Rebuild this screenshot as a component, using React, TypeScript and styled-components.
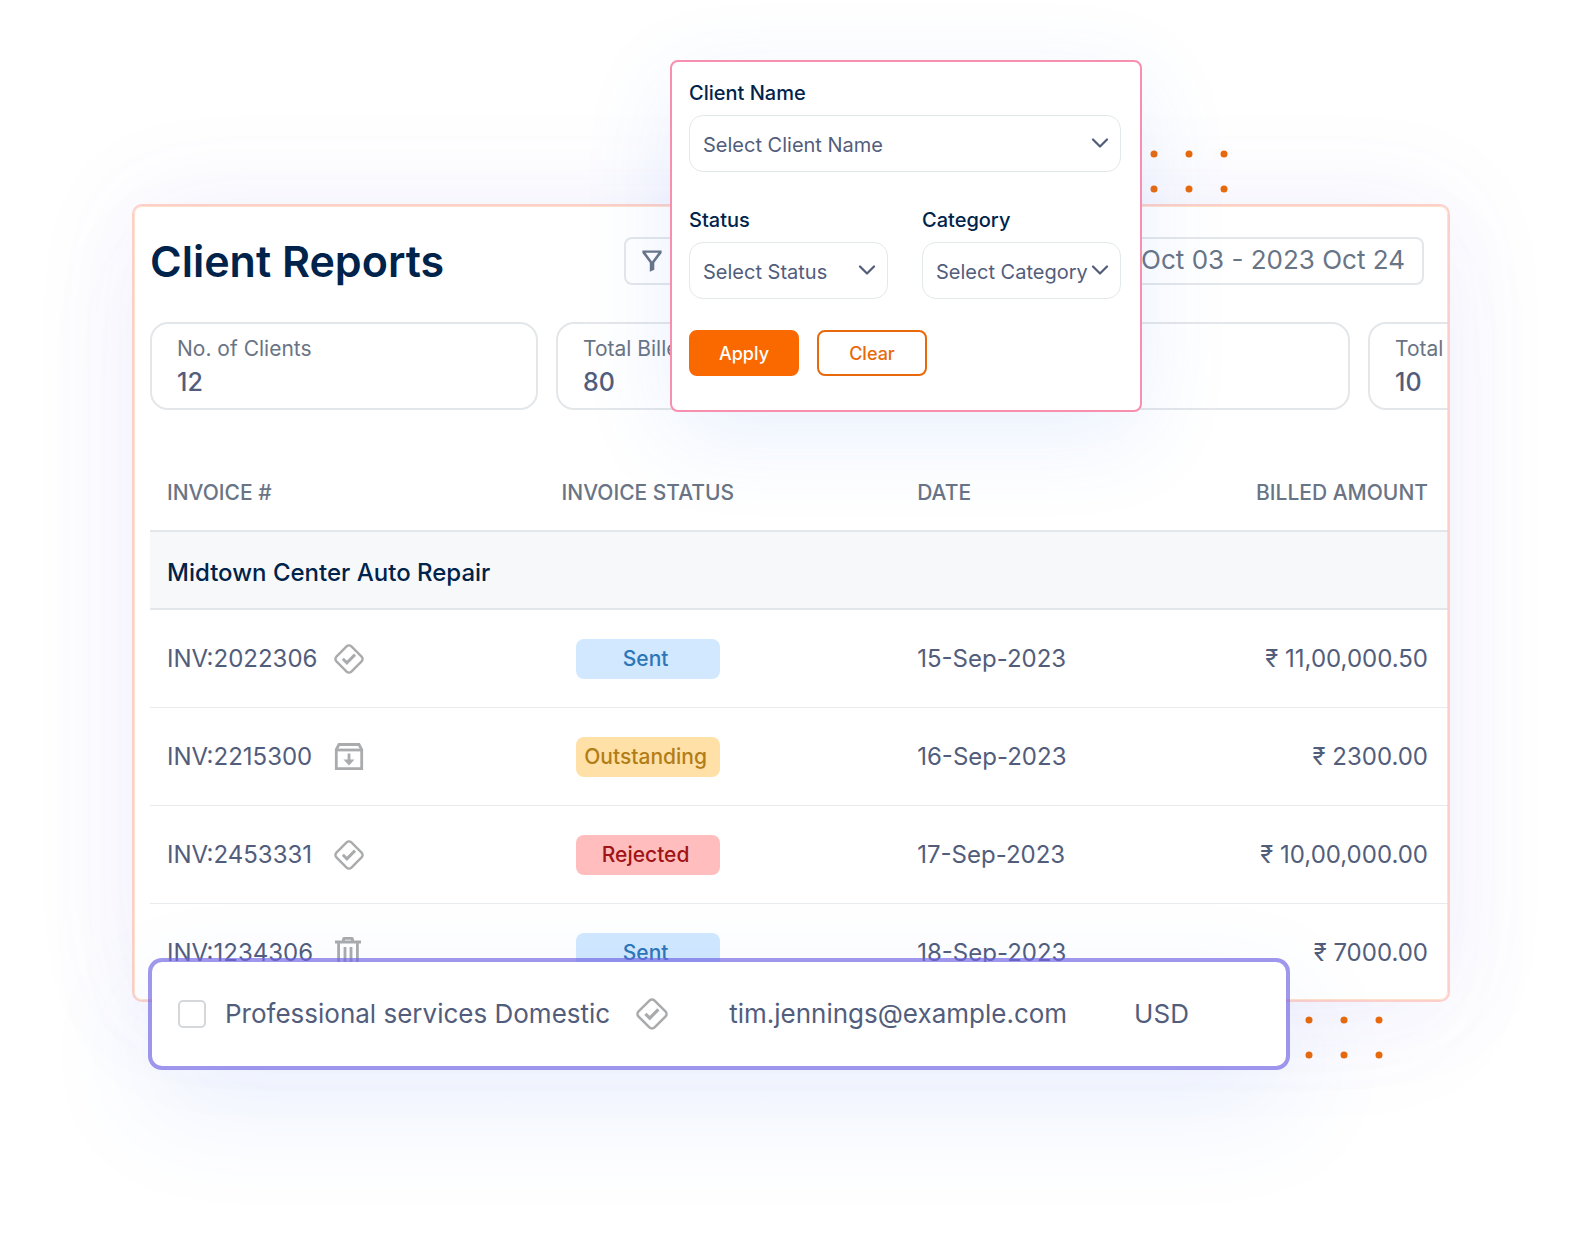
import React from "react";
import styled, { createGlobalStyle, css } from "styled-components";

const ink = "#00234b";
const body = "#525d7c";
const muted = "#697485";
const line = "#e4e7ea";
const iconGrey = "#a9abad";
const orange = "#e8690c";

const Global = createGlobalStyle`
  *, *::before, *::after { box-sizing: border-box; }
  body { margin: 0; background: #fff; overflow-x: hidden; }
  button, input, select { font: inherit; }
`;

const Page = styled.main`
  min-height: 100vh;
  padding: 204px 132px 232px;
  font-family: Inter, "Liberation Sans", sans-serif;
  color: ${body};
`;

const Stage = styled.div`
  position: relative;
`;

const Panel = styled.section`
  position: relative;
  height: 798px;
  padding: 30px 0 0 16px;
  overflow: hidden;
  background: #fff;
  border: 2px solid #fccfcb;
  border-radius: 10px;
  box-shadow: 0 0 110px rgba(108, 92, 231, 0.08), 0 40px 120px rgba(90, 110, 240, 0.04);

  &::after {
    content: "";
    position: absolute;
    inset: 0;
    border: 1px solid rgba(255, 205, 165, 0.6);
    border-radius: 8px;
    pointer-events: none;
  }
`;

const Header = styled.header`
  display: flex;
  align-items: center;
  height: 50px;
  padding-right: 24px;
`;

const Title = styled.h1`
  flex: 0 0 474px;
  margin: 0;
  font-size: 43px;
  line-height: 50px;
  font-weight: 600;
  color: ${ink};
`;

const toolButton = css`
  height: 48px;
  color: ${muted};
  background: none;
  border: 2px solid ${line};
  border-radius: 8px;
`;

const FilterButton = styled.button`
  ${toolButton}
  width: 58px;
  padding: 4px 15px 0;
  text-align: left;
`;

const DateButton = styled.button`
  ${toolButton}
  margin-left: auto;
  padding: 0 17px 2px;
  min-width: 400px;
  font-size: 26px;
  line-height: 40px;
  text-align: right;
`;

const Stats = styled.div`
  display: flex;
  gap: 18px;
  margin-top: 36px;
`;

const Stat = styled.div`
  flex: 0 0 388px;
  height: 88px;
  padding: 9px 25px;
  border: 2px solid ${line};
  border-radius: 18px;
`;

const StatLabel = styled.div`
  font-size: 21px;
  line-height: 32px;
  color: ${muted};
`;

const StatValue = styled.div`
  font-size: 25px;
  line-height: 35px;
  font-weight: 500;
`;

const Table = styled.table`
  width: 100%;
  margin-top: 44px;
  table-layout: fixed;
  border-collapse: separate;
  border-spacing: 0;
`;

const Col = styled.col<{ $share?: string }>`
  width: ${(p) => p.$share ?? "auto"};
`;

const cell = css<{ $right?: boolean }>`
  padding: 0 20px 0 17px;
  text-align: ${(p) => (p.$right ? "right" : "left")};
  white-space: nowrap;
`;

const HeadCell = styled.th<{ $right?: boolean }>`
  ${cell}
  height: 78px;
  font-size: 21px;
  font-weight: 500;
  color: ${muted};
  border-bottom: 2px solid ${line};
`;

const GroupCell = styled.th`
  ${cell}
  height: 78px;
  padding-top: 4px;
  font-size: 24px;
  font-weight: 500;
  color: ${ink};
  background: #f7f8fa;
  border-bottom: 2px solid ${line};
`;

const Cell = styled.td<{ $right?: boolean }>`
  ${cell}
  height: 98px;
  font-size: 24px;
  border-bottom: 1px solid #e8ebed;
`;

const Invoice = styled.div`
  display: flex;
  align-items: center;
  gap: 16px;
`;

const InvoiceId = styled.span`
  min-width: 151px;
`;

type Tone = "Sent" | "Outstanding" | "Rejected";
const tones: Record<Tone, [string, string]> = {
  Sent: ["#d1e8ff", "#2c76b8"],
  Outstanding: ["#ffe1a8", "#b27d17"],
  Rejected: ["#ffbdbd", "#a01316"],
};

const Badge = styled.span<{ $tone: Tone }>`
  display: block;
  width: 144px;
  height: 40px;
  margin-left: 14px;
  padding-right: 4px;
  font-size: 21px;
  line-height: 40px;
  font-weight: 500;
  text-align: center;
  border-radius: 8px;
  background: ${(p) => tones[p.$tone][0]};
  color: ${(p) => tones[p.$tone][1]};
`;

const FilterCard = styled.form`
  position: absolute;
  top: -144px;
  left: 538px;
  width: 472px;
  padding: 18px 19px 34px 17px;
  background: #fff;
  border: 2px solid #f98fae;
  border-radius: 8px;
  box-shadow: 0 24px 90px rgba(75, 135, 240, 0.12);
`;

const Fields = styled.div`
  display: grid;
  grid-template-columns: 1fr 1fr;
  gap: 35px 34px;
`;

const Field = styled.div<{ $wide?: boolean }>`
  display: grid;
  gap: 9px;
  grid-column: ${(p) => (p.$wide ? "1 / -1" : "auto")};
`;

const Label = styled.label`
  font-size: 20px;
  line-height: 26px;
  font-weight: 500;
  color: ${ink};
`;

const SelectBox = styled.div`
  display: grid;
  align-items: center;

  > * { grid-area: 1 / 1; }
  > svg { justify-self: end; margin-right: 12px; pointer-events: none; }
`;

const Select = styled.select`
  appearance: none;
  width: 100%;
  height: 57px;
  padding: 2px 0 0 13px;
  font-size: 20px;
  color: ${body};
  background: transparent;
  border: 1px solid #e3e8ea;
  border-radius: 14px;
`;

const Actions = styled.div`
  display: flex;
  gap: 18px;
  margin-top: 31px;
`;

const ActionButton = styled.button<{ $primary?: boolean }>`
  width: 110px;
  height: 46px;
  padding: 0;
  font-size: 18px;
  font-weight: 500;
  border-radius: 8px;
  border: 2px solid ${(p) => (p.$primary ? "#fa6800" : orange)};
  background: ${(p) => (p.$primary ? "#fa6800" : "#fff")};
  color: ${(p) => (p.$primary ? "#fff" : orange)};
`;

const ClientBar = styled.div`
  position: absolute;
  top: 754px;
  left: 16px;
  right: 160px;
  display: flex;
  align-items: center;
  height: 112px;
  padding: 0 26px;
  font-size: 26px;
  line-height: 34px;
  white-space: nowrap;
  background: #fff;
  background-clip: padding-box;
  border: 4px solid rgba(114, 101, 227, 0.68);
  border-radius: 14px;
  box-shadow: 0 40px 110px rgba(75, 125, 235, 0.11);
`;

const Check = styled.input`
  appearance: none;
  width: 28px;
  height: 28px;
  margin: 0 19px 0 0;
  background: #fff;
  border: 2px solid #d5d8da;
  border-radius: 5px;
`;

const ServiceName = styled.label`
  margin-right: 26px;
`;

const Email = styled.span`
  margin: 0 67px 0 61px;
`;

const Dots = styled.svg<{ $place: "top" | "bottom" }>`
  position: absolute;
  ${(p) =>
    p.$place === "top"
      ? css`top: -54px; left: 1018px;`
      : css`top: 812px; right: 67px;`}
`;

const DotGrid = ({ place }: { place: "top" | "bottom" }) => (
  <Dots $place={place} width="78" height="43" aria-hidden="true">
    {[4, 39, 74].map((x) =>
      [4, 39].map((y) => <circle key={`${x}-${y}`} cx={x} cy={y} r="3.5" fill={orange} />)
    )}
  </Dots>
);

const DiamondCheck = ({ size = 30 }: { size?: number }) => (
  <svg width={size} height={size} viewBox="0 0 30 30" fill="none" stroke={iconGrey} strokeWidth="2.4" aria-hidden="true">
    <rect x="4.400" y="4.400" width="21.200" height="21.200" rx="3.400" transform="rotate(45 15 15)" />
    <path d="m8.800 14.800 4.100 4.100 8.100-8.300" strokeWidth="3" />
  </svg>
);

const ArchiveIcon = () => (
  <svg width="30" height="30" viewBox="0 1 30 30" fill="none" stroke={iconGrey} strokeWidth="2.800" aria-hidden="true">
    <path d="M2.300 8.500 5 3.500h20l2.700 5v19.200H2.300Z" />
    <path d="M2.300 9h25.400" />
    <path d="M15 12.500v7" />
    <path d="M9.500 18.500h11L15 24.500Z" fill={iconGrey} stroke="none" />
  </svg>
);

const TrashIcon = () => (
  <svg width="28" height="32" viewBox="-1 0 28 32" fill="none" stroke={iconGrey} strokeWidth="2.800" aria-hidden="true">
    <path d="M0 5h26M8.500 4.500V2q0-.6.6-.6h7.800q.6 0 .6.6v2.500M3.600 5v25h18.800V5M10 10v16M16 10v16" />
  </svg>
);

const FunnelIcon = () => (
  <svg width="22" height="24" viewBox="0 0 22 24" fill={muted} fillRule="evenodd" aria-hidden="true">
    <path d="M1.400 1.500h19.200v2.400L13.300 13.800v7L8.800 22.800v-9L1.400 3.900ZM4.600 3.800 11 12.500l6.400-8.700Z" />
  </svg>
);

const Chevron = () => (
  <svg width="18" height="12" viewBox="0 0 18 12" fill="none" stroke={body} strokeWidth="2.2" strokeLinecap="round" strokeLinejoin="round" aria-hidden="true">
    <path d="m2 1.500 7 7 7-7" />
  </svg>
);

const stats = [
  { label: "No. of Clients", value: "12" },
  { label: "Total Billed", value: "80" },
  { label: "", value: "" },
  { label: "Total", value: "10" },
];

const rows: { id: string; icon: React.ReactNode; status: Tone; date: string; amount: string }[] = [
  { id: "INV:2022306", icon: <DiamondCheck />, status: "Sent", date: "15-Sep-2023", amount: "₹ 11,00,000.50" },
  { id: "INV:2215300", icon: <ArchiveIcon />, status: "Outstanding", date: "16-Sep-2023", amount: "₹ 2300.00" },
  { id: "INV:2453331", icon: <DiamondCheck />, status: "Rejected", date: "17-Sep-2023", amount: "₹ 10,00,000.00" },
  { id: "INV:1234306", icon: <TrashIcon />, status: "Sent", date: "18-Sep-2023", amount: "₹ 7000.00" },
];

const SelectField = ({ id, label, placeholder, wide }: { id: string; label: string; placeholder: string; wide?: boolean }) => (
  <Field $wide={wide}>
    <Label htmlFor={id}>{label}</Label>
    <SelectBox>
      <Select id={id} defaultValue="">
        <option value="">{placeholder}</option>
      </Select>
      <Chevron />
    </SelectBox>
  </Field>
);

export default function App() {
  return (
    <Page>
      <Global />
      <Stage>
        <Panel>
          <Header>
            <Title>Client Reports</Title>
            <FilterButton type="button" aria-label="Filter">
              <FunnelIcon />
            </FilterButton>
            <DateButton type="button">Oct 03 - 2023 Oct 24</DateButton>
          </Header>
          <Stats>
            {stats.map((s, i) => (
              <Stat key={i}>
                <StatLabel>{s.label}</StatLabel>
                <StatValue>{s.value}</StatValue>
              </Stat>
            ))}
          </Stats>
          <Table>
            <colgroup>
              <Col $share="30.4%" />
              <Col $share="27.4%" />
              <Col $share="21%" />
              <Col />
            </colgroup>
            <thead>
              <tr>
                <HeadCell scope="col">INVOICE #</HeadCell>
                <HeadCell scope="col">INVOICE STATUS</HeadCell>
                <HeadCell scope="col">DATE</HeadCell>
                <HeadCell scope="col" $right>BILLED AMOUNT</HeadCell>
              </tr>
            </thead>
            <tbody>
              <tr>
                <GroupCell scope="rowgroup" colSpan={4}>Midtown Center Auto Repair</GroupCell>
              </tr>
              {rows.map((r) => (
                <tr key={r.id}>
                  <Cell>
                    <Invoice>
                      <InvoiceId>{r.id}</InvoiceId>
                      {r.icon}
                    </Invoice>
                  </Cell>
                  <Cell>
                    <Badge $tone={r.status}>{r.status}</Badge>
                  </Cell>
                  <Cell>{r.date}</Cell>
                  <Cell $right>{r.amount}</Cell>
                </tr>
              ))}
            </tbody>
          </Table>
        </Panel>

        <DotGrid place="top" />
        <DotGrid place="bottom" />

        <FilterCard onSubmit={(e) => e.preventDefault()}>
          <Fields>
            <SelectField id="client" label="Client Name" placeholder="Select Client Name" wide />
            <SelectField id="status" label="Status" placeholder="Select Status" />
            <SelectField id="category" label="Category" placeholder="Select Category" />
          </Fields>
          <Actions>
            <ActionButton type="submit" $primary>Apply</ActionButton>
            <ActionButton type="reset">Clear</ActionButton>
          </Actions>
        </FilterCard>

        <ClientBar>
          <Check type="checkbox" id="service" />
          <ServiceName htmlFor="service">Professional services Domestic</ServiceName>
          <DiamondCheck size={32} />
          <Email>tim.jennings@example.com</Email>
          <span>USD</span>
        </ClientBar>
      </Stage>
    </Page>
  );
}
